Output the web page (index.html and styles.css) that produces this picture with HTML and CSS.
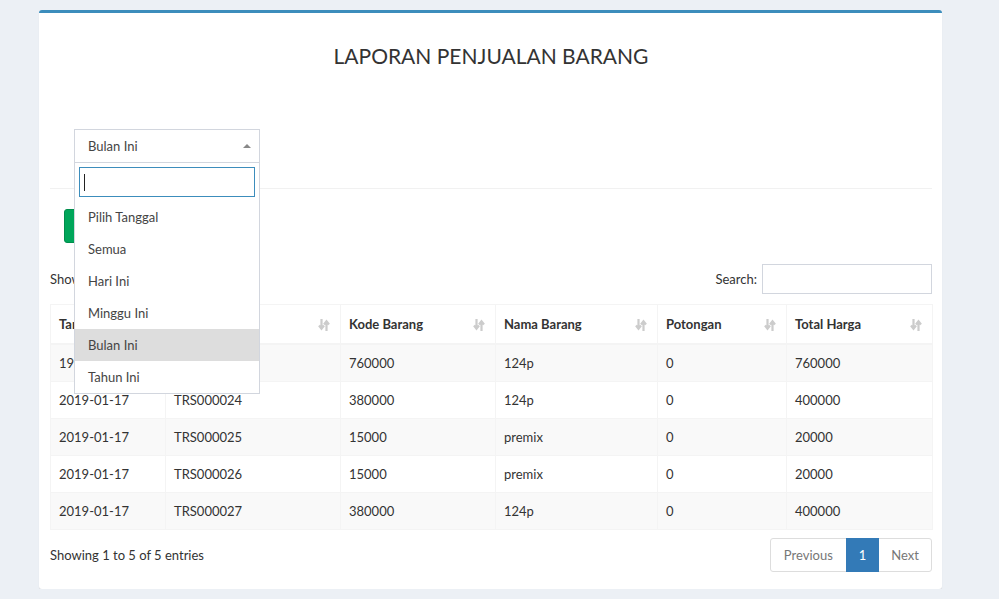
FILE: index.html
```html
<!DOCTYPE html>
<html lang="id">
<head>
<meta charset="utf-8">
<title>Laporan Penjualan Barang</title>
<link rel="stylesheet" href="styles.css">
</head>
<body>
<div class="wrapper">
  <div class="box">
    <h3 class="box-title">LAPORAN PENJUALAN BARANG</h3>

    <div class="filter">
      <div class="select2">
        <div class="selection">
          <span class="selection-text">Bulan Ini</span>
          <span class="arrow"></span>
        </div>
        <div class="dropdown">
          <div class="search-wrap"><div class="search-field"><span class="caret-line"></span></div></div>
          <ul class="results">
            <li>Pilih Tanggal</li>
            <li>Semua</li>
            <li>Hari Ini</li>
            <li>Minggu Ini</li>
            <li class="selected">Bulan Ini</li>
            <li>Tahun Ini</li>
          </ul>
        </div>
      </div>
    </div>

    <hr class="divider">

    <div class="actions">
      <button class="btn-green" type="button">Cetak PDF</button>
    </div>

    <div class="dt-top">
      <div class="dt-length">Show <span class="len-select">10</span> entries</div>
      <label class="dt-search">Search: <span class="search-input"></span></label>
    </div>

    <table class="dt">
      <colgroup>
        <col class="c1"><col class="c2"><col class="c3"><col class="c4"><col class="c5"><col class="c6">
      </colgroup>
      <thead>
        <tr>
          <th>Tanggal<svg class="sort" viewBox="0 0 12 14"><path d="M3.5 1v9M1 7.5l2.5 3.2 2.5-3.2M8.5 13V4M6 6.5l2.5-3.2 2.5 3.2"/></svg></th>
          <th>No Transaksi<svg class="sort" viewBox="0 0 12 14"><path d="M3.5 1v9M1 7.5l2.5 3.2 2.5-3.2M8.5 13V4M6 6.5l2.5-3.2 2.5 3.2"/></svg></th>
          <th>Kode Barang<svg class="sort" viewBox="0 0 12 14"><path d="M3.5 1v9M1 7.5l2.5 3.2 2.5-3.2M8.5 13V4M6 6.5l2.5-3.2 2.5 3.2"/></svg></th>
          <th>Nama Barang<svg class="sort" viewBox="0 0 12 14"><path d="M3.5 1v9M1 7.5l2.5 3.2 2.5-3.2M8.5 13V4M6 6.5l2.5-3.2 2.5 3.2"/></svg></th>
          <th>Potongan<svg class="sort" viewBox="0 0 12 14"><path d="M3.5 1v9M1 7.5l2.5 3.2 2.5-3.2M8.5 13V4M6 6.5l2.5-3.2 2.5 3.2"/></svg></th>
          <th>Total Harga<svg class="sort" viewBox="0 0 12 14"><path d="M3.5 1v9M1 7.5l2.5 3.2 2.5-3.2M8.5 13V4M6 6.5l2.5-3.2 2.5 3.2"/></svg></th>
        </tr>
      </thead>
      <tbody>
        <tr><td>1970-01-01</td><td>TRS000023</td><td>760000</td><td>124p</td><td>0</td><td>760000</td></tr>
        <tr><td>2019-01-17</td><td>TRS000024</td><td>380000</td><td>124p</td><td>0</td><td>400000</td></tr>
        <tr><td>2019-01-17</td><td>TRS000025</td><td>15000</td><td>premix</td><td>0</td><td>20000</td></tr>
        <tr><td>2019-01-17</td><td>TRS000026</td><td>15000</td><td>premix</td><td>0</td><td>20000</td></tr>
        <tr><td>2019-01-17</td><td>TRS000027</td><td>380000</td><td>124p</td><td>0</td><td>400000</td></tr>
      </tbody>
    </table>

    <div class="dt-bottom">
      <div class="dt-info">Showing 1 to 5 of 5 entries</div>
      <ul class="pagination">
        <li class="disabled"><span>Previous</span></li>
        <li class="active"><span>1</span></li>
        <li class="disabled"><span>Next</span></li>
      </ul>
    </div>
  </div>
</div>
</body>
</html>
```

FILE: styles.css
```css
* { box-sizing: border-box; }

html, body {
  margin: 0;
  padding: 0;
  background: #ecf0f5;
  font-family: Lato, "Liberation Sans", Arial, sans-serif;
  font-size: 13px;
  line-height: 20px;
  color: #333;
}

.wrapper {
  padding: 10px 57px 0 39px;
}

.box {
  background: #fff;
  border-top: 3px solid #3c8dbc;
  border-radius: 3px;
  box-shadow: 0 1px 1px rgba(0, 0, 0, 0.1);
  padding: 0 10px 17px 11px;
}

.box-title {
  margin: 31px 0 0;
  font-size: 21px;
  line-height: 24px;
  font-weight: 400;
  text-align: center;
  color: #333;
}

.filter {
  margin-top: 61px;
  padding-left: 24px;
}

.select2 {
  position: relative;
  width: 186px;
  z-index: 10;
}

.selection {
  height: 34px;
  border: 1px solid #d2d6de;
  display: flex;
  align-items: center;
  padding: 0 8px 0 13px;
  position: relative;
}

.selection-text {
  flex: 1;
  color: #444;
}

.arrow {
  width: 0;
  height: 0;
  border-left: 4px solid transparent;
  border-right: 4px solid transparent;
  border-bottom: 4px solid #888;
}

.dropdown {
  position: absolute;
  left: 0;
  top: 33px;
  width: 186px;
  background: #fff;
  border: 1px solid #d2d6de;
}

.search-wrap {
  padding: 4px;
}

.search-field {
  height: 30px;
  border: 1px solid #3c8dbc;
  padding: 6px 4px;
}

.caret-line {
  display: block;
  width: 1px;
  height: 17px;
  background: #222;
}

.results {
  list-style: none;
  margin: 0;
  padding: 0;
}

.results li {
  padding: 6px 13px;
  line-height: 20px;
  color: #444;
}

.results li.selected {
  background: #ddd;
}

.divider {
  margin: 25px 0 0;
  border: 0;
  border-top: 1px solid #f1f1f1;
}

.actions {
  margin-top: 20px;
  padding-left: 14px;
}

.btn-green {
  height: 34px;
  width: 90px;
  background: #00a65a;
  border: 1px solid #008d4c;
  border-radius: 3px;
  color: #fff;
  font: inherit;
}

.dt-top {
  margin-top: 21px;
  display: flex;
  justify-content: space-between;
  align-items: center;
}

.dt-length {
  display: flex;
  align-items: center;
  gap: 4px;
}

.len-select {
  display: block;
  width: 52px;
  height: 30px;
  border: 1px solid #d2d6de;
  padding: 4px 6px;
}

.dt-search {
  display: flex;
  align-items: center;
  gap: 5px;
}

.search-input {
  display: block;
  width: 170px;
  height: 30px;
  border: 1px solid #d2d6de;
}

.dt {
  margin-top: 10px;
  width: 882px;
  border-collapse: collapse;
  table-layout: fixed;
  border: 1px solid #f4f4f4;
}

.c1 { width: 115px; }
.c2 { width: 175px; }
.c3 { width: 155px; }
.c4 { width: 162px; }
.c5 { width: 129px; }
.c6 { width: 146px; }

.dt th,
.dt td {
  border: 1px solid #f4f4f4;
  padding: 8px;
  text-align: left;
  line-height: 20px;
  white-space: nowrap;
  overflow: hidden;
}

.dt th {
  font-weight: 700;
  border-bottom-width: 2px;
  position: relative;
  padding: 9px 28px 9px 8px;
}

.sort {
  position: absolute;
  right: 10px;
  top: 13px;
  width: 12px;
  height: 14px;
  fill: none;
  stroke: #cccccc;
  stroke-width: 2.2;
}

.dt tbody tr:nth-child(odd) td {
  background: #f9f9f9;
}

.dt-bottom {
  margin-top: 8px;
  display: flex;
  justify-content: space-between;
  align-items: center;
}

.pagination {
  list-style: none;
  margin: 0;
  padding: 0;
  display: flex;
}

.pagination li span {
  display: block;
  padding: 6px 12px;
  line-height: 20px;
  border: 1px solid #ddd;
  margin-left: -1px;
  color: #777;
  background: #fff;
}

.pagination li:first-child span {
  border-radius: 3px 0 0 3px;
  margin-left: 0;
  padding: 6px 13px;
}

.pagination li:last-child span {
  border-radius: 0 3px 3px 0;
}

.pagination li.active span {
  background: #337ab7;
  border-color: #337ab7;
  color: #fff;
  position: relative;
}
```
